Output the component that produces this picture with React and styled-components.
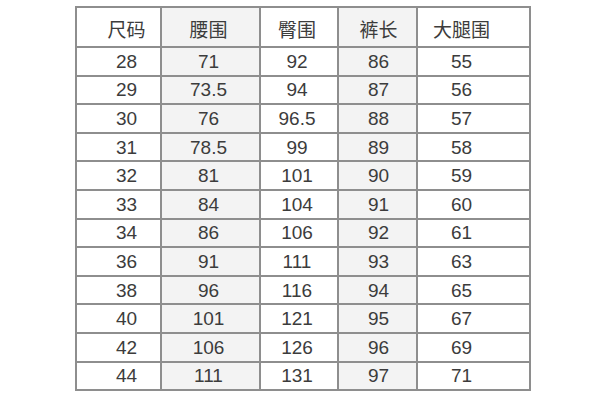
import React from "react";
import styled, { createGlobalStyle } from "styled-components";

const GlobalStyle = createGlobalStyle`
  html, body {
    margin: 0;
    padding: 0;
    background: #ffffff;
  }
  body {
    font-family: "Liberation Sans", "Noto Sans CJK SC", sans-serif;
  }
`;

const columns = [
  { title: "尺码", width: 85, shade: false, shift: 8 },
  { title: "腰围", width: 99, shade: true, shift: -2 },
  { title: "臀围", width: 78, shade: false, shift: -2 },
  { title: "裤长", width: 79, shade: true, shift: 1 },
  { title: "大腿围", width: 113, shade: false, shift: -12 }
];

const rows = [
  ["28", "71", "92", "86", "55"],
  ["29", "73.5", "94", "87", "56"],
  ["30", "76", "96.5", "88", "57"],
  ["31", "78.5", "99", "89", "58"],
  ["32", "81", "101", "90", "59"],
  ["33", "84", "104", "91", "60"],
  ["34", "86", "106", "92", "61"],
  ["36", "91", "111", "93", "63"],
  ["38", "96", "116", "94", "65"],
  ["40", "101", "121", "95", "67"],
  ["42", "106", "126", "96", "69"],
  ["44", "111", "131", "97", "71"]
];

const App = () => {
  return (
    <Page>
      <GlobalStyle />
      <SizeTable>
        <colgroup>
          {columns.map(col => (
            <col key={col.title} style={{ width: col.width }} />
          ))}
        </colgroup>
        <thead>
          <tr>
            {columns.map(col => (
              <HeadCell key={col.title} $shade={col.shade} $shift={col.shift}>
                {col.title}
              </HeadCell>
            ))}
          </tr>
        </thead>
        <tbody>
          {rows.map(row => (
            <tr key={row[0]}>
              {row.map((value, i) => (
                <Cell key={i} $shade={columns[i].shade} $shift={columns[i].shift}>
                  {value}
                </Cell>
              ))}
            </tr>
          ))}
        </tbody>
      </SizeTable>
    </Page>
  );
};

export default App;

const Page = styled.div`
  width: 600px;
  height: 400px;
  padding: 6px 0 0 75px;
  box-sizing: border-box;
  background: #fff;
`;

const SizeTable = styled.table`
  border-collapse: collapse;
  table-layout: fixed;
  width: 454px;
  border: 2px solid #858585;
  color: #3c3c3c;
`;

const HeadCell = styled.th`
  height: 35px;
  padding: 3px 0 0;
  font-weight: normal;
  font-size: 19px;
  text-align: center;
  border: 2px solid #8e8e8e;
  background: ${props => (props.$shade ? "#f3f3f3" : "#ffffff")};
  text-indent: ${props => props.$shift * 2}px;
`;

const Cell = styled.td`
  height: 26.6px;
  padding: 0;
  font-size: 19px;
  line-height: 1;
  text-align: center;
  border: 2px solid #8e8e8e;
  background: ${props => (props.$shade ? "#f3f3f3" : "#ffffff")};
  text-indent: ${props => props.$shift * 2}px;
`;
